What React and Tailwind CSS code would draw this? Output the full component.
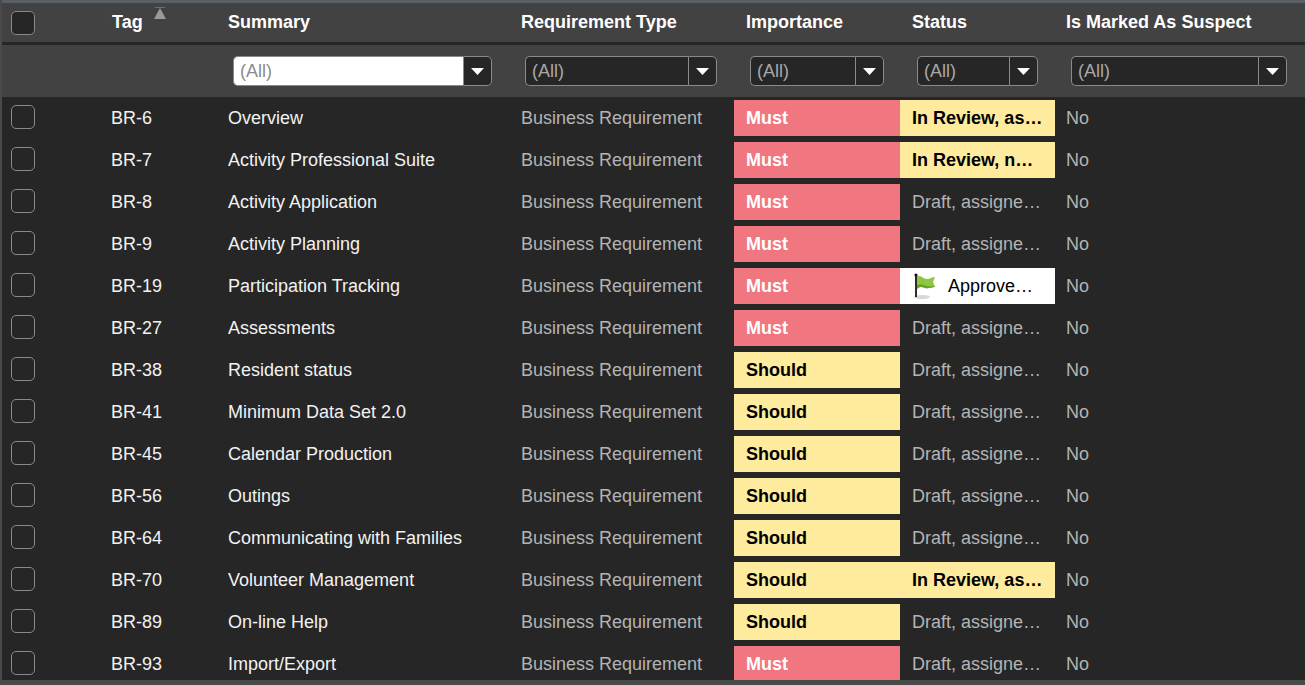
import React from 'react';

const MUST = 'Must';
const SHOULD = 'Should';
const DRAFT = { label: 'Draft, assigne…', kind: 'plain' };

const rows = [
  { tag: 'BR-6', summary: 'Overview', importance: MUST, status: { label: 'In Review, as…', kind: 'review' } },
  { tag: 'BR-7', summary: 'Activity Professional Suite', importance: MUST, status: { label: 'In Review, n…', kind: 'review' } },
  { tag: 'BR-8', summary: 'Activity Application', importance: MUST, status: DRAFT },
  { tag: 'BR-9', summary: 'Activity Planning', importance: MUST, status: DRAFT },
  { tag: 'BR-19', summary: 'Participation Tracking', importance: MUST, status: { label: 'Approve…', kind: 'approved' } },
  { tag: 'BR-27', summary: 'Assessments', importance: MUST, status: DRAFT },
  { tag: 'BR-38', summary: 'Resident status', importance: SHOULD, status: DRAFT },
  { tag: 'BR-41', summary: 'Minimum Data Set 2.0', importance: SHOULD, status: DRAFT },
  { tag: 'BR-45', summary: 'Calendar Production', importance: SHOULD, status: DRAFT },
  { tag: 'BR-56', summary: 'Outings', importance: SHOULD, status: DRAFT },
  { tag: 'BR-64', summary: 'Communicating with Families', importance: SHOULD, status: DRAFT },
  { tag: 'BR-70', summary: 'Volunteer Management', importance: SHOULD, status: { label: 'In Review, as…', kind: 'review' } },
  { tag: 'BR-89', summary: 'On-line Help', importance: SHOULD, status: DRAFT },
  { tag: 'BR-93', summary: 'Import/Export', importance: MUST, status: DRAFT },
];

const gridCols = 'grid grid-cols-[98px_116px_293px_225px_166px_155px_1fr]';

const Checkbox = () => (
  <span className="block w-6 h-6 rounded-[5px] border border-[#8a8a8a] bg-[#262626]" />
);

const Caret = () => (
  <svg width="13" height="7" viewBox="0 0 13 7" className="block">
    <polygon points="0,0 13,0 6.5,7" fill="#ffffff" />
  </svg>
);

const SortArrow = () => (
  <svg width="14" height="13" viewBox="0 0 14 13" className="block">
    <rect x="2" y="0" width="10" height="1" fill="#6f6f6f" />
    <polygon points="7,1 13,12 1,12" fill="#9a9a9a" />
  </svg>
);

const Flag = () => (
  <svg width="24" height="28" viewBox="0 0 24 28" className="block shrink-0">
    <ellipse cx="9" cy="25" rx="8" ry="2" fill="#d8d8d8" />
    <rect x="2" y="3" width="2" height="22" fill="#2b2b2b" />
    <circle cx="3" cy="3" r="1.6" fill="#111111" />
    <path d="M4 4 C8 3 10 7 14 7 C17 7 19 5 22 5 L20 10 L22 15 C18 15 16 17 12 16 C9 15 7 14 4 17 Z" fill="#8fc73e" />
    <path d="M4 13 C8 11 11 13 14 14 C17 15 19 14 21 14 L22 15 C18 15 16 17 12 16 C9 15 7 14 4 17 Z" fill="#6aa02a" />
  </svg>
);

const Filter = ({ width, inputWidth, light }) => (
  <div className="flex h-[30px]" style={{ width }}>
    <div
      className={`flex items-center h-full pl-[6px] rounded-l-[5px] border border-r-0 border-[#8a8a8a] ${light ? 'bg-white text-[#8c8c8c]' : 'bg-[#262626] text-[#a8a8a8]'}`}
      style={{ width: inputWidth }}
    >
      (All)
    </div>
    <div className="flex-1 flex items-center justify-center h-full rounded-r-[5px] border border-[#8a8a8a] bg-[#262626]">
      <Caret />
    </div>
  </div>
);

const StatusCell = ({ status }) => {
  if (status.kind === 'review') {
    return <div className="h-full flex items-center px-3 bg-[#feeb9d] text-black font-bold whitespace-nowrap">{status.label}</div>;
  }
  if (status.kind === 'approved') {
    return (
      <div className="h-full flex items-center pl-[13px] gap-[11px] bg-white text-black whitespace-nowrap">
        <Flag />
        {status.label}
      </div>
    );
  }
  return <div className="h-full flex items-center px-3 text-[#b4b4b4] whitespace-nowrap">{status.label}</div>;
};

const Row = ({ row }) => (
  <div className={`${gridCols} h-[42px] py-[3px] items-stretch`}>
    <div className="flex items-center pl-[9px] -translate-y-px"><Checkbox /></div>
    <div className="flex items-center pl-[11px] text-[#f2f2f2]">{row.tag}</div>
    <div className="flex items-center pl-3 text-[#f2f2f2] whitespace-nowrap">{row.summary}</div>
    <div className="flex items-center pl-3 text-[#b4b4b4] whitespace-nowrap">Business Requirement</div>
    <div className={`flex items-center pl-3 font-bold ${row.importance === MUST ? 'bg-[#f0777f] text-white' : 'bg-[#feeb9d] text-black'}`}>
      {row.importance}
    </div>
    <StatusCell status={row.status} />
    <div className="flex items-center pl-[11px] text-[#b4b4b4]">No</div>
  </div>
);

export default function App() {
  return (
    <div className="w-[1305px] h-[685px] flex flex-col overflow-hidden bg-[#262626] border-l-2 border-[#4a4a4a] text-[18px] font-['Liberation_Sans',Arial,sans-serif]">
      <div className="h-[3px] shrink-0 bg-[#5a5f66]" />
      <div className={`${gridCols} h-[39px] shrink-0 items-center bg-[#424242] text-white font-bold`}>
        <div className="pl-[9px]"><Checkbox /></div>
        <div className="flex items-start pl-3">
          Tag
          <span className="ml-[10px] mt-[-2px]"><SortArrow /></span>
        </div>
        <div className="pl-3">Summary</div>
        <div className="pl-3">Requirement Type</div>
        <div className="pl-3 ml-0">Importance</div>
        <div className="pl-3">Status</div>
        <div className="pl-[11px] whitespace-nowrap">Is Marked As Suspect</div>
      </div>
      <div className="h-[3px] shrink-0 bg-[#262626]" />
      <div className={`${gridCols} h-[52px] shrink-0 items-center bg-[#424242]`}>
        <div />
        <div />
        <div className="pl-[17px]"><Filter width={259} inputWidth={230} light /></div>
        <div className="pl-4"><Filter width={192} inputWidth={163} /></div>
        <div className="pl-4"><Filter width={134} inputWidth={105} /></div>
        <div className="pl-[17px]"><Filter width={121} inputWidth={92} /></div>
        <div className="pl-4"><Filter width={216} inputWidth={187} /></div>
      </div>
      <div className="flex-1 min-h-0 overflow-hidden">
        {rows.map((row) => <Row key={row.tag} row={row} />)}
      </div>
      <div className="h-[5px] shrink-0 bg-[#4a4a4a]" />
    </div>
  );
}
